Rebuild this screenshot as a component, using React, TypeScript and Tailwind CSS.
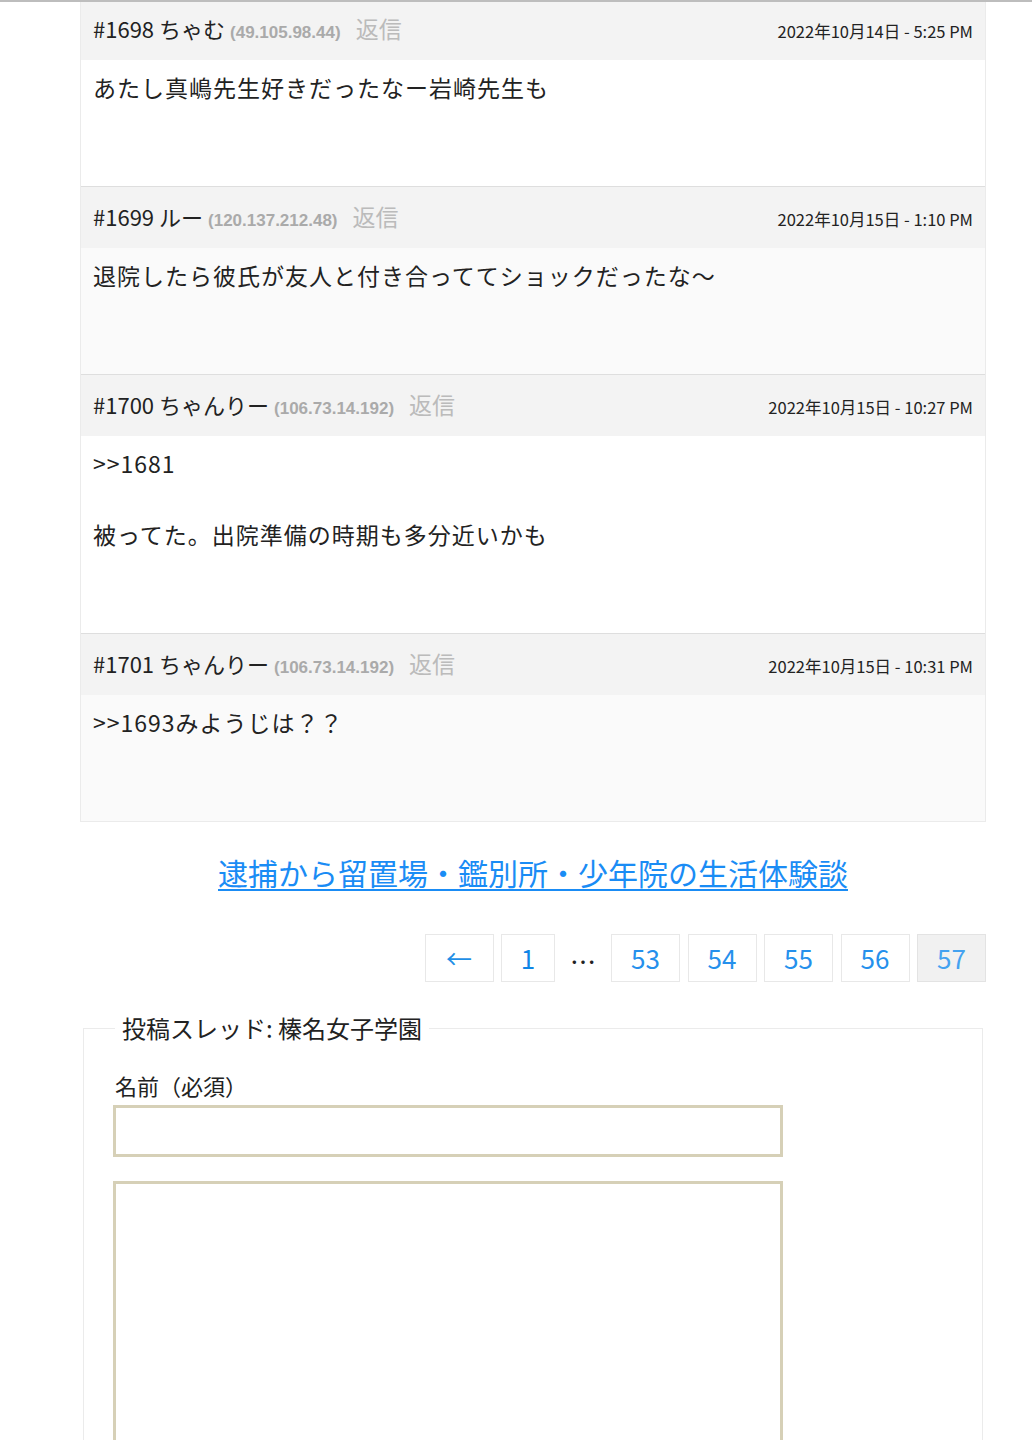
import React from 'react';

interface Comment {
  no: number;
  name: string;
  ip: string;
  date: string;
  lines: string[];
}

const comments: Comment[] = [
  { no: 1698, name: 'ちゃむ', ip: '49.105.98.44', date: '2022年10月14日 - 5:25 PM', lines: ['あたし真嶋先生好きだったなー岩崎先生も'] },
  { no: 1699, name: 'ルー', ip: '120.137.212.48', date: '2022年10月15日 - 1:10 PM', lines: ['退院したら彼氏が友人と付き合っててショックだったな〜'] },
  { no: 1700, name: 'ちゃんりー', ip: '106.73.14.192', date: '2022年10月15日 - 10:27 PM', lines: ['>>1681', '被ってた。出院準備の時期も多分近いかも'] },
  { no: 1701, name: 'ちゃんりー', ip: '106.73.14.192', date: '2022年10月15日 - 10:31 PM', lines: ['>>1693みようじは？？'] },
];

const pages = ['53', '54', '55', '56'];

function CommentItem({ c, index }: { c: Comment; index: number }) {
  const first = index === 0;
  return (
    <div className={first ? '' : 'border-t border-[#dedede]'}>
      <div className={`flex items-center bg-[#f3f3f3] px-[12px] ${first ? 'h-[58px] pb-[5px]' : 'h-[61px] pb-[2px]'}`}>
        <div className="flex w-full items-baseline justify-between">
          <div className="flex items-baseline">
            <span className="text-[22px] text-[#222]">#{c.no} {c.name}</span>
            <span className="ml-[5px] font-['Liberation_Sans',Arial,sans-serif] text-[17px] font-bold text-[#aaa]">({c.ip})</span>
            <span className="ml-[15px] text-[23px] text-[#bbb]">返信</span>
          </div>
          <span className="text-[16.5px] text-[#222]">{c.date}</span>
        </div>
      </div>
      <div className={`px-[12px] pb-[46px] pt-[9px] ${index % 2 === 1 ? 'bg-[#fafafa]' : 'bg-white'}`}>
        {c.lines.map((line, i) => (
          <p key={i} className="mb-[35px] text-[23px] leading-[36px] tracking-[1px] text-[#222]">
            {line}
          </p>
        ))}
      </div>
    </div>
  );
}

export default function App() {
  return (
    <div className="min-h-[1440px] overflow-hidden bg-white font-['Noto_Sans_CJK_JP','Noto_Sans',sans-serif]">
      <div className="h-[2px] bg-[#bdbdbd]" />

      <div className="ml-[80px] w-[906px] border-x border-b border-[#ebebeb]">
        {comments.map((c, i) => (
          <CommentItem key={c.no} c={c} index={i} />
        ))}
      </div>

      <div className="ml-[80px] mt-[30px] w-[906px] text-center">
        <a href="#" className="text-[30px] leading-[40px] text-[#1a8cf5] underline decoration-2 underline-offset-[4px]">
          逮捕から留置場・鑑別所・少年院の生活体験談
        </a>
      </div>

      <div className="ml-[424px] mt-[42px] flex w-[562px] items-center justify-end gap-[7.5px] text-[26px] leading-none">
        <span className="flex h-[48px] w-[69px] items-center justify-center border border-[#e8e8e8] text-[#1e8fe6]">←</span>
        <span className="flex h-[48px] w-[54px] items-center justify-center border border-[#e8e8e8] text-[#0f86e6]">1</span>
        <span className="flex h-[48px] w-[41px] items-center justify-center pt-[6px] text-[#222]">…</span>
        {pages.map((p) => (
          <span key={p} className="flex h-[48px] w-[69px] items-center justify-center border border-[#e8e8e8] text-[#2590ec]">
            {p}
          </span>
        ))}
        <span className="flex h-[48px] w-[69px] items-center justify-center border border-[#e3e3e3] bg-[#f1f1f1] text-[#44a2f0]">57</span>
      </div>

      <fieldset className="ml-[83px] mt-[31px] h-[440px] w-[900px] border border-[#ebebeb] px-[29px] pt-[27px]">
        <legend className="ml-[2px] px-[7px] text-[24px] leading-[30px] text-[#222]">投稿スレッド: 榛名女子学園</legend>
        <label className="block pl-[2px] text-[22px] leading-[30px] text-[#222]">名前（必須）</label>
        <input type="text" className="mt-[5px] block h-[52px] w-[670px] border-[3px] border-[#d6d0b7] bg-white" />
        <textarea className="mt-[24px] block h-[300px] w-[670px] resize-none border-[3px] border-[#d6d0b7] bg-white" />
      </fieldset>
    </div>
  );
}
